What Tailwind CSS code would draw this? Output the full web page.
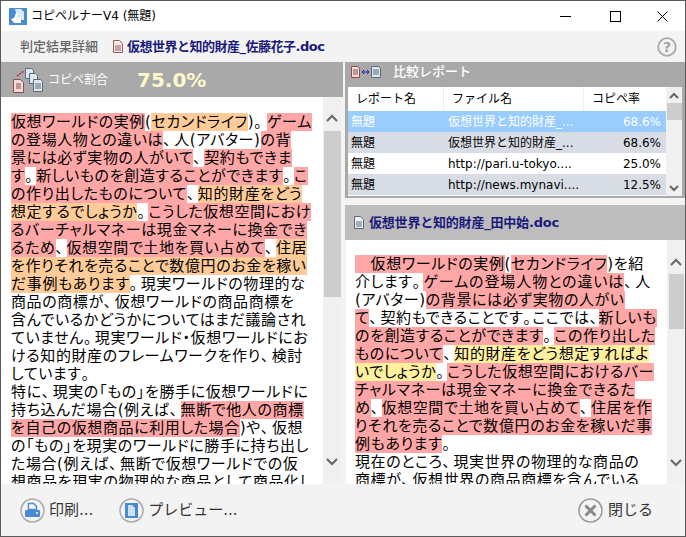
<!DOCTYPE html>
<html lang="ja">
<head>
<meta charset="UTF-8">
<title>コピペルナーV4</title>
<script src="https://cdn.jsdelivr.net/npm/@tailwindcss/browser@4"></script>
</head>
<body class="bg-[#f3f3f3]">
<div class="w-[686px] h-[537px] flex flex-col overflow-hidden border border-[#5a5a5a] bg-[#f3f3f3] text-black [font-family:'DejaVu_Sans','Noto_Sans_CJK_JP',sans-serif]">

  <!-- title bar -->
  <div class="h-[30px] shrink-0 bg-white flex items-center pl-[8px]">
    <svg width="18" height="17" viewBox="0 0 18 17"><rect width="18" height="17" fill="#4a8ad4"/><path d="M6 1h6l3 3v8H9z" fill="#dfeaf6"/><path d="M2 11l3-1 2-5 2 1-1 3 4 1v5H5z" fill="#fff"/></svg>
    <span class="ml-[4px] text-[12px] leading-none">コピペルナーV4 (無題)</span>
    <div class="ml-auto flex h-full items-center">
      <svg class="mr-[39px]" width="11" height="11" viewBox="0 0 11 11"><path d="M0 5.500h11" stroke="#000"/></svg>
      <svg class="mr-[36px]" width="11" height="11" viewBox="0 0 11 11"><rect x=".5" y=".5" width="10" height="10" fill="none" stroke="#000"/></svg>
      <svg class="mr-[17px]" width="11" height="11" viewBox="0 0 11 11"><path d="M.5.5l10 10M10.500.5l-10 10" stroke="#000"/></svg>
    </div>
  </div>

  <!-- document title row -->
  <div class="h-[31px] shrink-0 flex items-center pl-[19px] pr-[8px]">
    <span class="text-[13px] font-medium text-[#666]">判定結果詳細</span>
    <svg class="ml-[15px]" width="10" height="13" viewBox="0 0 10 13"><path d="M.5.5h6l3 3v9h-9z" fill="#f7e9e6" stroke="#9a5a5a"/><path d="M2 6h6M2 8h6M2 10h6" stroke="#9a5a5a"/></svg>
    <span class="ml-[4px] text-[13px] font-semibold tracking-[-0.5px] text-[#1a1a7a]">仮想世界と知的財産_佐藤花子.doc</span>
    <svg class="ml-auto" width="20" height="20" viewBox="0 0 20 20"><circle cx="10" cy="10" r="8.800" fill="none" stroke="#a8a8a8" stroke-width="1.800"/><text x="10" y="15" text-anchor="middle" font-size="14" font-weight="700" fill="#a0a0a0">?</text></svg>
  </div>

  <!-- panes -->
  <div class="flex-1 min-h-0 flex">
    <!-- left pane -->
    <div class="w-[342px] shrink-0 flex flex-col">
      <div class="h-[35px] shrink-0 bg-[#a9a9a9] flex items-center pl-[12px]">
        <svg width="32" height="26" viewBox="0 0 32 26"><path d="M.5 12.500h7l3 3v10H.5z" fill="#f5dcd8" stroke="#8c4a4a"/><path d="M3 17h5M3 19h5M3 21h5" stroke="#8c4a4a"/><path d="M4 9l7-5" stroke="#c02040" stroke-width="1.500" stroke-dasharray="2 1"/><path d="M12.500 1.500h6l2 2v8h-8z" fill="#dfe8f2" stroke="#5a6a7a"/><path d="M16.500 6.500h6l2 2v8h-8z" fill="#dfe8f2" stroke="#5a6a7a"/><path d="M20.500 12.500h7l2 2v10h-9z" fill="#dfe8f2" stroke="#5a6a7a"/><path d="M22 17h6M22 19h6M22 21h6" stroke="#5a6a7a"/></svg>
        <span class="ml-[3px] text-[12px] text-white">コピペ割合</span>
        <span class="ml-[29px] text-[20px] font-bold text-[#fff8cc]">75.0%</span>
      </div>
      <div class="flex-1 min-h-0 flex">
        <div class="w-[322px] bg-white overflow-hidden pl-[10px] pt-[16px] text-[15px] leading-[18px] whitespace-nowrap tracking-[0.6px] [font-feature-settings:'palt']">
          <div><span class="bg-[#ffa6a6] inline-block h-[18px]">仮想ワールドの実例</span>(<span class="bg-[#ffcc99] inline-block h-[18px]">セカンドライフ</span>)<span class="inline-block w-[13px]">。</span><span class="bg-[#ffa6a6] inline-block h-[18px]">ゲーム</span></div>
          <div><span class="bg-[#ffa6a6] inline-block h-[18px]">の登場人物との違いは</span><span class="inline-block w-[11px]">、</span>人(アバター)<span class="bg-[#ffa6a6] inline-block h-[18px]">の背</span></div>
          <div><span class="bg-[#ffa6a6] inline-block h-[18px]">景には必ず実物の人がいて</span><span class="inline-block w-[11px]">、</span><span class="bg-[#ffa6a6] inline-block h-[18px]">契約もできま</span></div>
          <div><span class="bg-[#ffa6a6] inline-block h-[18px]">す</span><span class="inline-block w-[11px]">。</span><span class="bg-[#ffa6a6] inline-block h-[18px]">新しいものを創造することができます</span><span class="inline-block w-[11px]">。</span><span class="bg-[#ffa6a6] inline-block h-[18px]">こ</span></div>
          <div><span class="bg-[#ffa6a6] inline-block h-[18px]">の作り出したものについて</span><span class="inline-block w-[11px]">、</span><span class="bg-[#ffcc99] inline-block h-[18px]">知的財産をどう</span></div>
          <div><span class="bg-[#ffcc99] inline-block h-[18px]">想定するでしょうか</span><span class="inline-block w-[11px]">。</span><span class="bg-[#ffa6a6] inline-block h-[18px]">こうした仮想空間におけ</span></div>
          <div><span class="bg-[#ffa6a6] inline-block h-[18px]">るバーチャルマネーは現金マネーに換金でき</span></div>
          <div><span class="bg-[#ffa6a6] inline-block h-[18px]">るため</span><span class="inline-block w-[11px]">、</span><span class="bg-[#ffa6a6] inline-block h-[18px]">仮想空間で土地を買い占めて</span><span class="inline-block w-[11px]">、</span><span class="bg-[#ffcc99] inline-block h-[18px]">住居</span></div>
          <div><span class="bg-[#ffcc99] inline-block h-[18px]">を作りそれを売ることで数億円のお金を稼い</span></div>
          <div><span class="bg-[#ffcc99] inline-block h-[18px]">だ事例もあります</span><span class="inline-block w-[11px]">。</span>現実ワールドの物理的な</div>
          <div>商品の商標が<span class="inline-block w-[11px]">、</span>仮想ワールドの商品商標を</div>
          <div>含んでいるかどうかについてはまだ議論され</div>
          <div>ていません<span class="inline-block w-[11px]">。</span>現実ワールド・仮想ワールドにお</div>
          <div>ける知的財産のフレームワークを作り<span class="inline-block w-[11px]">、</span>検討</div>
          <div>しています<span class="inline-block w-[11px]">。</span></div>
          <div>特に<span class="inline-block w-[11px]">、</span>現実の「もの」を勝手に仮想ワールドに</div>
          <div>持ち込んだ場合(例えば<span class="inline-block w-[11px]">、</span><span class="bg-[#ffa6a6] inline-block h-[18px]">無断で他人の商標</span></div>
          <div><span class="bg-[#ffa6a6] inline-block h-[18px]">を自己の仮想商品に利用した場合</span>)や<span class="inline-block w-[11px]">、</span>仮想</div>
          <div>の「もの」を現実のワールドに勝手に持ち出し</div>
          <div>た場合(例えば<span class="inline-block w-[11px]">、</span>無断で仮想ワールドでの仮</div>
          <div>想商品を現実の物理的な商品として商品化し<span class="inline-block w-[11px]">、</span></div>
        </div>
        <div class="w-[18px] bg-[#f0f0f0] flex flex-col items-center">
          <svg class="mt-[17px] shrink-0" width="12" height="8" viewBox="0 0 12 8"><path d="M1 7l5-5 5 5" fill="none" stroke="#666" stroke-width="2"/></svg>
          <div class="mt-[9px] w-[17px] h-[166px] bg-[#cdcdcd]"></div>
          <svg class="mt-[161px] shrink-0" width="12" height="8" viewBox="0 0 12 8"><path d="M1 1l5 5 5-5" fill="none" stroke="#666" stroke-width="2"/></svg>
        </div>
      </div>
    </div>

    <!-- right pane -->
    <div class="flex-1 min-w-0 flex flex-col pl-[2px]">
      <div class="bg-[#a9a9a9] h-[136px] shrink-0 px-[3px] flex flex-col">
        <div class="h-[25px] pb-[5px] shrink-0 flex items-center pl-[3px]">
          <svg width="31" height="12" viewBox="0 0 31 12"><path d="M.5.500h6l2 2v9h-8z" fill="#f5dcd8" stroke="#8c4a4a"/><path d="M2 4h5M2 6h5M2 8h5" stroke="#8c4a4a"/><path d="M11 6h7M13 4l-2 2 2 2M16 4l2 2-2 2" fill="none" stroke="#2020c0"/><path d="M20.500.500h7l2 2v9h-9z" fill="#dfe8f2" stroke="#5a6a7a"/><path d="M22 4h6M22 6h6M22 8h6" stroke="#5a6a7a"/></svg>
          <span class="ml-[11px] text-[13px] font-medium text-white">比較レポート</span>
        </div>
        <div class="flex h-[109px] bg-white">
          <div class="w-[318px] shrink-0 text-[12px]">
            <div class="h-[24px] grid grid-cols-[96px_140px_82px] items-center bg-white">
              <span class="pl-[8px] pb-[1px] h-full flex items-center border-r border-[#eee]">レポート名</span>
              <span class="pl-[8px] pb-[1px] h-full flex items-center border-r border-[#eee]">ファイル名</span>
              <span class="pl-[8px] pb-[1px] h-full flex items-center">コピペ率</span>
            </div>
            <div class="h-[21px] grid grid-cols-[100px_136px_82px] items-center bg-[#99ccff] text-white"><span class="pl-[3px]">無題</span><span>仮想世界と知的財産_...</span><span class="text-right pr-[5px]">68.6%</span></div>
            <div class="h-[21px] grid grid-cols-[100px_136px_82px] items-center bg-[#d8dde5]"><span class="pl-[3px]">無題</span><span>仮想世界と知的財産_...</span><span class="text-right pr-[5px]">68.6%</span></div>
            <div class="h-[21px] grid grid-cols-[100px_136px_82px] items-center bg-white"><span class="pl-[3px]">無題</span><span>http://pari.u-tokyo....</span><span class="text-right pr-[5px]">25.0%</span></div>
            <div class="h-[21px] grid grid-cols-[100px_136px_82px] items-center bg-[#d8dde5]"><span class="pl-[3px]">無題</span><span>http://news.mynavi....</span><span class="text-right pr-[5px]">12.5%</span></div>
          </div>
          <div class="flex-1 bg-[#f0f0f0] flex flex-col items-center">
            <svg class="mt-[5px] shrink-0" width="10" height="7" viewBox="0 0 10 7"><path d="M1 6l4-4 4 4" fill="none" stroke="#666" stroke-width="2"/></svg>
            <div class="mt-[4px] w-[15px] h-[17px] bg-[#cdcdcd]"></div>
            <svg class="mt-[65px] shrink-0" width="10" height="7" viewBox="0 0 10 7"><path d="M1 1l4 4 4-4" fill="none" stroke="#666" stroke-width="2"/></svg>
          </div>
        </div>
      </div>
      <div class="h-[7px] shrink-0"></div>
      <div class="h-[35px] shrink-0 bg-[#bdbdbd] flex items-center pl-[9px]">
        <svg width="10" height="13" viewBox="0 0 10 13"><path d="M.5.5h6l3 3v9h-9z" fill="#eef2f7" stroke="#5a6a7a"/><path d="M2 6h6M2 8h6M2 10h6" stroke="#5a6a7a"/></svg>
        <span class="ml-[5px] text-[13px] font-semibold tracking-[-0.2px] text-[#1a1a7a]">仮想世界と知的財産_田中始.doc</span>
      </div>
      <div class="flex-1 min-h-0 flex">
        <div class="w-[321px] ml-[1px] bg-white overflow-hidden pl-[9px] pt-[15px] text-[15px] leading-[18px] whitespace-nowrap tracking-[0.6px] [font-feature-settings:'palt']">
          <div><span class="bg-[#ffa6a6] inline-block h-[18px]">　仮想ワールドの実例</span>(<span class="bg-[#ffa6a6] inline-block h-[18px]">セカンドライフ</span>)を紹</div>
          <div>介します<span class="inline-block w-[11px]">。</span><span class="bg-[#ffa6a6] inline-block h-[18px] tracking-[0.9px]">ゲームの登場人物との違いは</span><span class="inline-block w-[11px]">、</span>人</div>
          <div>(アバター)<span class="bg-[#ffa6a6] inline-block h-[18px]">の背景には必ず実物の人がい</span></div>
          <div><span class="bg-[#ffa6a6] inline-block h-[18px]">て</span><span class="inline-block w-[11px]">、</span>契約もできることです<span class="inline-block w-[9px]">。</span>ここでは<span class="inline-block w-[9px]">、</span><span class="bg-[#ffa6a6] inline-block h-[18px]">新しいも</span></div>
          <div><span class="bg-[#ffa6a6] inline-block h-[18px]">のを創造することができます</span><span class="inline-block w-[11px]">。</span><span class="bg-[#ffa6a6] inline-block h-[18px]">この作り出した</span></div>
          <div><span class="bg-[#ffa6a6] inline-block h-[18px]">ものについて</span><span class="inline-block w-[11px]">、</span><span class="bg-[#fff0a0] inline-block h-[18px]">知的財産をどう想定すればよ</span></div>
          <div><span class="bg-[#fff0a0] inline-block h-[18px]">いでしょうか</span><span class="inline-block w-[11px]">。</span><span class="bg-[#ffa6a6] inline-block h-[18px]">こうした仮想空間におけるバー</span></div>
          <div><span class="bg-[#ffa6a6] inline-block h-[18px]">チャルマネーは現金マネーに換金できるた</span></div>
          <div><span class="bg-[#ffa6a6] inline-block h-[18px]">め</span><span class="inline-block w-[11px]">、</span><span class="bg-[#ffa6a6] inline-block h-[18px]">仮想空間で土地を買い占めて</span><span class="inline-block w-[11px]">、</span><span class="bg-[#ffa6a6] inline-block h-[18px]">住居を作</span></div>
          <div><span class="bg-[#ffa6a6] inline-block h-[18px]">りそれを売ることで数億円のお金を稼いだ事</span></div>
          <div><span class="bg-[#ffa6a6] inline-block h-[18px]">例もあります</span>。</div>
          <div>現在のところ<span class="inline-block w-[11px]">、</span>現実世界の物理的な商品の</div>
          <div>商標が<span class="inline-block w-[11px]">、</span>仮想世界の商品商標を含んでいる</div>
        </div>
        <div class="flex-1 bg-[#f0f0f0] flex flex-col items-center">
          <svg class="mt-[18px] shrink-0" width="12" height="8" viewBox="0 0 12 8"><path d="M1 7l5-5 5 5" fill="none" stroke="#666" stroke-width="2"/></svg>
          <div class="mt-[8px] w-[15px] h-[55px] bg-[#cdcdcd]"></div>
          <svg class="mt-[130px] shrink-0" width="12" height="8" viewBox="0 0 12 8"><path d="M1 1l5 5 5-5" fill="none" stroke="#666" stroke-width="2"/></svg>
        </div>
      </div>
    </div>
  </div>

  <!-- footer -->
  <div class="h-[52px] shrink-0 flex items-center pl-[19px] pr-[32px] text-[15px] text-[#333]">
    <svg width="25" height="25" viewBox="0 0 25 25"><circle cx="12.500" cy="12.500" r="11.500" fill="#f3f3f3" stroke="#aaa" stroke-width="1.500"/><path d="M8.500 5.500h5l3 3v3h-8z" fill="#fff" stroke="#4a8ad4" stroke-width="1.500"/><rect x="5" y="12" width="15" height="7" rx="1" fill="#4a8ad4"/><circle cx="17" cy="15" r="1" fill="#fff"/></svg>
    <span class="ml-[4px]">印刷...</span>
    <svg class="ml-[26px]" width="25" height="25" viewBox="0 0 25 25"><circle cx="12.500" cy="12.500" r="11.500" fill="#f3f3f3" stroke="#aaa" stroke-width="1.500"/><rect x="6" y="5" width="13" height="15" fill="#4a8ad4"/><path d="M9 7h4l3 3v8H9z" fill="#cfe0f3"/></svg>
    <span class="ml-[4px]">プレビュー...</span>
    <svg class="ml-auto" width="25" height="25" viewBox="0 0 25 25"><circle cx="12.500" cy="12.500" r="11.500" fill="#f3f3f3" stroke="#999" stroke-width="1.500"/><path d="M7.500 7.500l10 10M17.500 7.500l-10 10" stroke="#8a8a8a" stroke-width="3"/></svg>
    <span class="ml-[5px]">閉じる</span>
  </div>
</div>
</body>
</html>
